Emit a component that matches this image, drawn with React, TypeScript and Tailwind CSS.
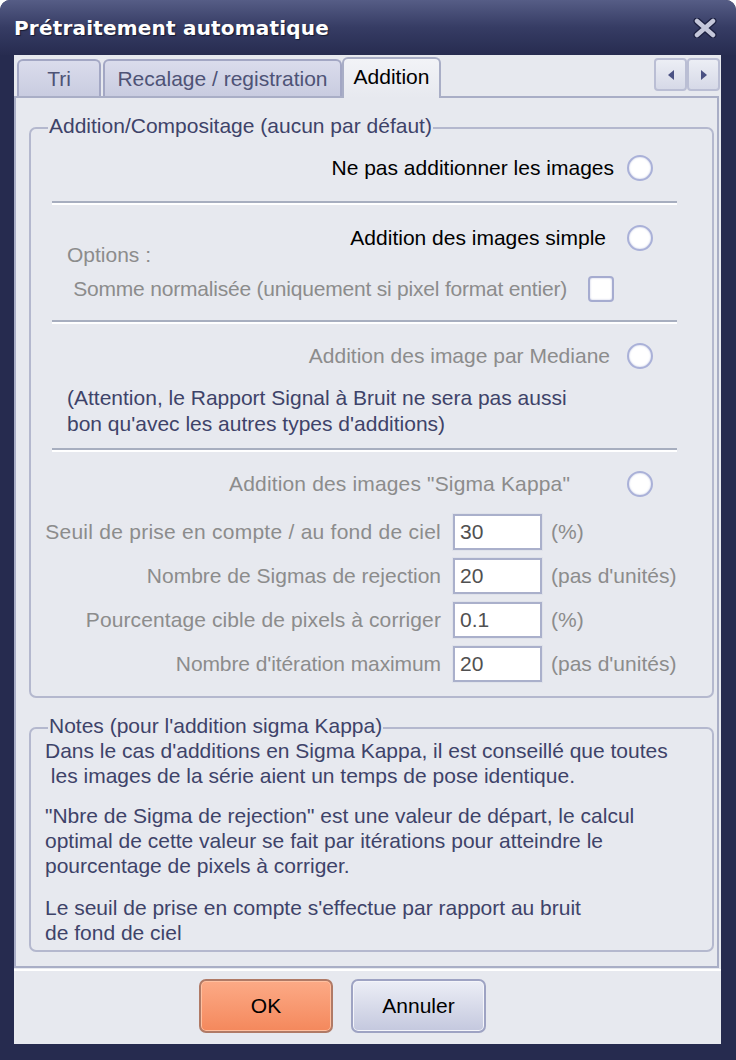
import React from "react";

const Radio = () => (
  <div className="w-[26px] h-[26px] shrink-0 rounded-full border-2 border-[#aab1d8] bg-white shadow-[inset_0_0_2px_rgba(140,150,200,0.6)]" />
);

const Sep = ({ mt }: { mt: string }) => (
  <div className={`${mt} ml-[21px] w-[625px] h-[4px] border-t-2 border-b-2 border-t-[#a7aebf] border-b-white`} />
);

const GroupBox = ({
  title,
  className,
  children,
}: {
  title: string;
  className: string;
  children: React.ReactNode;
}) => (
  <div className={`relative border-2 border-[#b4b8ce] rounded-[7px] ${className}`}>
    <div className="absolute top-[-15px] left-[17px] px-[1px] bg-[#e7e9ef] text-[#3e4369] leading-[24px]">
      {title}
    </div>
    {children}
  </div>
);

const rows: [string, string, string, string][] = [
  ["Seuil de prise en compte / au fond de ciel", "30", "(%)", "tracking-[0.25px]"],
  ["Nombre de Sigmas de rejection", "20", "(pas d'unités)", "tracking-[0px]"],
  ["Pourcentage cible de pixels à corriger", "0.1", "(%)", "tracking-[0.1px]"],
  ["Nombre d'itération maximum", "20", "(pas d'unités)", "tracking-[-0.1px]"],
];

export default function App() {
  return (
    <div className="w-[736px] h-[1060px] bg-[#262b4f] rounded-t-[10px] flex flex-col overflow-hidden font-['Liberation_Sans',Arial,sans-serif] text-[21px] leading-[26px]">
      {/* Title bar */}
      <div className="h-[55px] shrink-0 flex items-center justify-between pl-[14px] pr-[19px] bg-linear-to-b from-[#565d86] via-[#363c64] to-[#272c50]">
        <span className="font-['DejaVu_Sans',sans-serif] font-bold text-[20px] leading-[24px] tracking-[0.2px] text-white [text-shadow:1px_1px_1px_#161930]">
          Prétraitement automatique
        </span>
        <svg width="24" height="20" viewBox="0 0 24 20">
          <path d="M4 3 L20 17 M20 3 L4 17" stroke="#1c2040" strokeWidth="7" strokeLinecap="round" />
          <path d="M4 3 L20 17 M20 3 L4 17" stroke="#c4c7da" strokeWidth="4.5" strokeLinecap="round" />
        </svg>
      </div>

      {/* Client area */}
      <div className="ml-[14px] w-[707px] h-[989px] bg-[#e7e9ef] flex flex-col">
        {/* Tab strip */}
        <div className="h-[41px] shrink-0 flex items-end pl-[3px] relative z-10">
          <div className="w-[84px] h-[37px] flex items-center justify-center rounded-t-[6px] border-2 border-b-0 border-[#a3a7c4] bg-linear-to-b from-[#dadcec] to-[#c9cce0] text-[#4e5376]">
            Tri
          </div>
          <div className="ml-[2px] w-[239px] h-[37px] flex items-center justify-center rounded-t-[6px] border-2 border-b-0 border-[#a3a7c4] bg-linear-to-b from-[#dadcec] to-[#c9cce0] text-[#4e5376]">
            Recalage / registration
          </div>
          <div className="w-[99px] h-[41px] mb-[-2px] pb-[4px] flex items-center justify-center rounded-t-[6px] border-2 border-b-0 border-[#a9aec6] bg-linear-to-b from-[#f2f3f7] to-[#e7e9ef] text-black">
            Addition
          </div>
          <div className="ml-auto mr-[1px] self-start mt-[3px] flex">
            <div className="w-[33px] h-[33px] flex items-center justify-center rounded-[4px] border-2 border-[#babed4] bg-linear-to-b from-[#eceef5] to-[#d6d9e7]">
              <svg width="6" height="10" viewBox="0 0 6 10">
                <path d="M6 0 L0 5 L6 10 Z" fill="#4a5183" />
              </svg>
            </div>
            <div className="w-[33px] h-[33px] flex items-center justify-center rounded-[4px] border-2 border-[#babed4] bg-linear-to-b from-[#eceef5] to-[#d6d9e7]">
              <svg width="6" height="10" viewBox="0 0 6 10">
                <path d="M0 0 L6 5 L0 10 Z" fill="#4a5183" />
              </svg>
            </div>
          </div>
        </div>

        {/* Tab panel */}
        <div className="w-[705px] h-[872px] shrink-0 border-2 border-[#a9aec6] pt-[29px] pl-[13px]">
          <GroupBox title="Addition/Compositage (aucun par défaut)" className="w-[685px] h-[571px] flex flex-col">
            <div className="mt-[26px] h-[26px] flex items-center justify-end pr-[59px]">
              <span className="text-black mr-[13px]">Ne pas additionner les images</span>
              <Radio />
            </div>
            <Sep mt="mt-[20px]" />
            <div className="mt-[20px] h-[26px] flex items-center justify-end pr-[59px]">
              <span className="text-black mr-[21px]">Addition des images simple</span>
              <Radio />
            </div>
            <div className="mt-[-6px] h-[20px] leading-[20px] pl-[36px] text-[#8c8c8c]">Options :</div>
            <div className="mt-[11px] h-[26px] flex items-center justify-end pr-[98px]">
              <span className="text-[#8c8c8c] mr-[21px] tracking-[-0.2px]">Somme normalisée (uniquement si pixel format entier)</span>
              <div className="w-[26px] h-[26px] shrink-0 rounded-[4px] border-2 border-[#a6acd0] bg-white shadow-[inset_0_0_2px_rgba(140,150,200,0.6)]" />
            </div>
            <Sep mt="mt-[18px]" />
            <div className="mt-[19px] h-[26px] flex items-center justify-end pr-[59px]">
              <span className="text-[#8c8c8c] mr-[17px]">Addition des image par Mediane</span>
              <Radio />
            </div>
            <div className="mt-[16px] pl-[36px] text-[#3e4369] leading-[26px]">
              (Attention, le Rapport Signal à Bruit ne sera pas aussi
              <br />
              bon qu'avec les autres types d'additions)
            </div>
            <Sep mt="mt-[11px]" />
            <div className="mt-[19px] h-[26px] flex items-center justify-end pr-[59px]">
              <span className="text-[#8c8c8c] mr-[57px] tracking-[0.15px]">Addition des images "Sigma Kappa"</span>
              <Radio />
            </div>
            <div className="mt-[17px] flex flex-col gap-[8px]">
              {rows.map(([label, value, unit, tr]) => (
                <div key={label} className="h-[36px] flex items-center">
                  <span className={`w-[410px] text-right text-[#8c8c8c] whitespace-nowrap ${tr}`}>{label}</span>
                  <div className="ml-[12px] w-[89px] h-[36px] flex items-center pl-[5px] bg-white border-2 border-[#aab0cb] shadow-[0_0_0_1px_#dfe2ea] text-[#505050]">
                    {value}
                  </div>
                  <span className="ml-[9px] text-[#8c8c8c]">{unit}</span>
                </div>
              ))}
            </div>
          </GroupBox>

          <GroupBox title="Notes (pour l'addition sigma Kappa)" className="mt-[29px] w-[685px] h-[225px] pt-[9px] pl-[14px]">
            <div className="text-[#3e4369] leading-[25px] whitespace-pre">
              <p>{"Dans le cas d'additions en Sigma Kappa, il est conseillé que toutes\n les images de la série aient un temps de pose identique."}</p>
              <p className="mt-[15px]">
                {"\"Nbre de Sigma de rejection\" est une valeur de départ, le calcul\noptimal de cette valeur se fait par itérations pour atteindre le\npourcentage de pixels à corriger."}
              </p>
              <p className="mt-[17px]">{"Le seuil de prise en compte s'effectue par rapport au bruit\nde fond de ciel"}</p>
            </div>
          </GroupBox>
        </div>

        {/* Buttons */}
        <div className="mt-[1px] h-[75px] border-t-2 border-white pt-[8px] pl-[185px] flex gap-[18px]">
          <div className="w-[134px] h-[54px] rounded-[7px] border-2 border-[#b07a66] bg-linear-to-b from-[#fcaa86] to-[#f4885c] shadow-[inset_0_0_0_1px_#ffc0a0] flex items-center justify-center text-black">
            OK
          </div>
          <div className="w-[135px] h-[54px] rounded-[7px] border-2 border-[#9ea3c3] bg-linear-to-b from-[#eceef6] to-[#c4c8de] shadow-[inset_0_0_0_1px_#f4f5fa] flex items-center justify-center text-black">
            Annuler
          </div>
        </div>
      </div>
    </div>
  );
}
